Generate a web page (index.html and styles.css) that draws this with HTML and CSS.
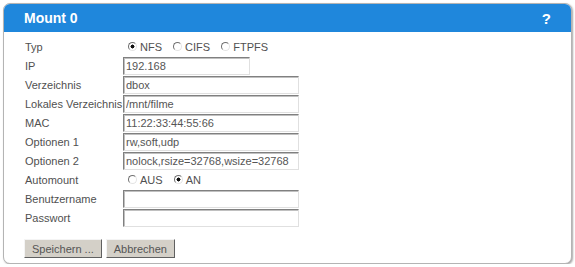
FILE: index.html
```html
<!DOCTYPE html>
<html lang="de">
<head>
  <meta charset="UTF-8">
  <title>Mount 0</title>
  <link rel="stylesheet" href="styles.css">
</head>
<body>
  <div class="panel">
    <div class="panel-head">
      <span class="title">Mount 0</span>
      <span class="help">?</span>
    </div>

    <form class="panel-body">
      <table class="fields">
        <tr>
          <td class="label">Typ</td>
          <td>
            <label class="opt"><input type="radio" name="typ" checked>NFS</label>
            <label class="opt"><input type="radio" name="typ">CIFS</label>
            <label class="opt"><input type="radio" name="typ">FTPFS</label>
          </td>
        </tr>
        <tr>
          <td class="label">IP</td>
          <td><input class="text short" type="text" value="192.168"></td>
        </tr>
        <tr>
          <td class="label">Verzeichnis</td>
          <td><input class="text" type="text" value="dbox"></td>
        </tr>
        <tr>
          <td class="label">Lokales Verzeichnis</td>
          <td><input class="text" type="text" value="/mnt/filme"></td>
        </tr>
        <tr>
          <td class="label">MAC</td>
          <td><input class="text" type="text" value="11:22:33:44:55:66"></td>
        </tr>
        <tr>
          <td class="label">Optionen 1</td>
          <td><input class="text" type="text" value="rw,soft,udp"></td>
        </tr>
        <tr>
          <td class="label">Optionen 2</td>
          <td><input class="text" type="text" value="nolock,rsize=32768,wsize=32768"></td>
        </tr>
        <tr>
          <td class="label">Automount</td>
          <td>
            <label class="opt"><input type="radio" name="auto">AUS</label>
            <label class="opt"><input type="radio" name="auto" checked>AN</label>
          </td>
        </tr>
        <tr>
          <td class="label">Benutzername</td>
          <td><input class="text" type="text" value=""></td>
        </tr>
        <tr>
          <td class="label">Passwort</td>
          <td><input class="text" type="password" value=""></td>
        </tr>
      </table>

      <div class="buttons">
        <button type="button" class="btn">Speichern ...</button>
        <button type="button" class="btn">Abbrechen</button>
      </div>
    </form>
  </div>
</body>
</html>
```

FILE: styles.css
```css
* {
  margin: 0;
  padding: 0;
  box-sizing: border-box;
}

body {
  font-family: "Liberation Sans", Arial, sans-serif;
  font-size: 11px;
  color: #505050;
  background: #fff;
  padding: 3px 3px 0 3px;
}

.panel {
  width: 569px;
  height: 261px;
  border: 1px solid #b4b4b4;
  border-radius: 7px;
  box-shadow: 1px 1px 2px rgba(0, 0, 0, 0.35);
  overflow: hidden;
  background: #fff;
}

.panel-head {
  height: 28px;
  background: #1f87dc;
  color: #fff;
  display: flex;
  align-items: center;
  justify-content: space-between;
  padding: 0 20px 0 20px;
  font-weight: bold;
}

.title {
  font-size: 14px;
}

.help {
  font-size: 15px;
}

.panel-body {
  padding: 5px 0 0 20px;
}

.fields {
  border-collapse: collapse;
}

.fields td {
  height: 19px;
  padding: 0;
  vertical-align: middle;
}

.fields .label {
  width: 99px;
  white-space: nowrap;
  padding-left: 1px;
}

.text {
  display: block;
  width: 176px;
  height: 18px;
  font-family: "Liberation Sans", Arial, sans-serif;
  font-size: 11px;
  color: #555;
  padding: 0 2px;
  border: 1px solid;
  border-color: #808080 #e0e0e0 #e0e0e0 #808080;
  box-shadow: inset 1px 1px 0 #c0c0c0;
  background: #fff;
}

.text.short {
  width: 127px;
}

.opt {
  margin-right: 3px;
}

/* old-style small radio */
.opt input {
  appearance: none;
  -webkit-appearance: none;
  width: 9px;
  height: 9px;
  border-radius: 50%;
  border: 1px solid;
  border-color: #707070 #e4e4e4 #e4e4e4 #707070;
  background: #fff;
  margin: 0 3px 0 5px;
  vertical-align: 0;
}

.opt input:checked {
  background: radial-gradient(circle, #111 0 1.8px, #fff 2.2px);
}

.buttons {
  margin-top: 12px;
  display: flex;
  gap: 4px;
}

.btn {
  height: 19px;
  padding: 0 7px;
  font-family: "Liberation Sans", Arial, sans-serif;
  font-size: 11px;
  color: #555;
  background: #d4d0c8;
  border: 1px solid;
  border-color: #f4f4f4 #606060 #606060 #f4f4f4;
}
```
